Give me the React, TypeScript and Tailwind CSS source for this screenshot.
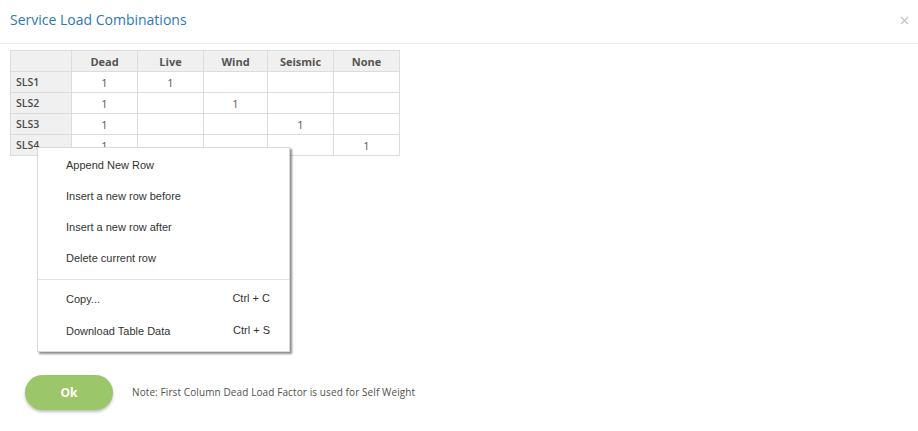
import React from 'react';

const COLUMNS = ['Dead', 'Live', 'Wind', 'Seismic', 'None'];
const WIDTHS = ['w-[66px]', 'w-[66px]', 'w-[64px]', 'w-[66px]', 'w-[66px]'];

const ROWS = [
  { name: 'SLS1', values: ['1', '1', '', '', ''] },
  { name: 'SLS2', values: ['1', '', '1', '', ''] },
  { name: 'SLS3', values: ['1', '', '', '1', ''] },
  { name: 'SLS4', values: ['1', '', '', '', '1'] },
];

const MENU_TOP = [
  'Append New Row',
  'Insert a new row before',
  'Insert a new row after',
  'Delete current row',
];

const MENU_BOTTOM = [
  { label: 'Copy...', key: 'Ctrl + C' },
  { label: 'Download Table Data', key: 'Ctrl + S' },
];

const openSans = { fontFamily: '"Open Sans", "Noto Sans", sans-serif' };

const App: React.FC = () => {
  return (
    <div className="relative w-[918px] h-[431px] bg-white overflow-hidden" style={openSans}>
      {/* Header */}
      <div className="flex items-center justify-between h-[44px] pl-[10px] pr-[9px] border-b border-[#e8e8e8]">
        <h1 className="text-[14px] text-[#2b78b9] leading-none -mt-[3px]">Service Load Combinations</h1>
        <svg width="9" height="9" viewBox="0 0 10 10" className="-mt-[2px]">
          <path d="M1 1L9 9M9 1L1 9" stroke="#c8c8c8" strokeWidth="1.6" />
        </svg>
      </div>

      {/* Table */}
      <div className="pl-[10px] pt-[6px]">
        <table className="border-collapse text-[11px] leading-none">
          <thead>
            <tr className="h-[21px] bg-[#f0f0f0]">
              <th className="w-[61px] border border-[#dcdcdc]"></th>
              {COLUMNS.map((c, i) => (
                <th key={c} className={`${WIDTHS[i]} border border-[#dcdcdc] font-bold text-[#555]`}>
                  {c}
                </th>
              ))}
            </tr>
          </thead>
          <tbody>
            {ROWS.map((r) => (
              <tr key={r.name} className="h-[21px]">
                <td className="bg-[#f0f0f0] border border-[#dcdcdc] pl-[5px] text-[10.5px] font-semibold text-[#4a4a4a]">{r.name}</td>
                {r.values.map((v, i) => (
                  <td key={i} className="border border-[#dcdcdc] text-center text-[#555]">
                    {v}
                  </td>
                ))}
              </tr>
            ))}
          </tbody>
        </table>
      </div>

      {/* Footer */}
      <div className="flex items-center mt-[219px] pl-[25px]">
        <button className="w-[88px] h-[35px] rounded-full bg-[#9cc66a] text-white font-bold text-[12px] shadow-[0_2px_3px_rgba(0,0,0,0.25)]">
          Ok
        </button>
        <span className="ml-[19px] text-[10px] tracking-[0.1px] text-[#505050]">
          Note: First Column Dead Load Factor is used for Self Weight
        </span>
      </div>

      {/* Context menu */}
      <div
        className="absolute left-[37px] top-[147px] w-[253px] bg-white border border-[#d9d9d9] shadow-[2px_2px_2px_rgba(0,0,0,0.45)] pt-[2px] pb-[4px] text-[11px] text-[#333]"
        style={{ fontFamily: '"Liberation Sans", Arial, sans-serif' }}
      >
        {MENU_TOP.map((m) => (
          <div key={m} className="h-[31px] flex items-center pl-[28px]">
            {m}
          </div>
        ))}
        <div className="mt-[5px] border-t border-[#e2e2e2]" />
        <div className="pt-[3px]">
          {MENU_BOTTOM.map((m) => (
            <div key={m.label} className="h-[32px] flex items-center justify-between pl-[28px] pr-[19px]">
              <span>{m.label}</span>
              <span className="-mt-[2px]">{m.key}</span>
            </div>
          ))}
        </div>
      </div>
    </div>
  );
};

export default App;
